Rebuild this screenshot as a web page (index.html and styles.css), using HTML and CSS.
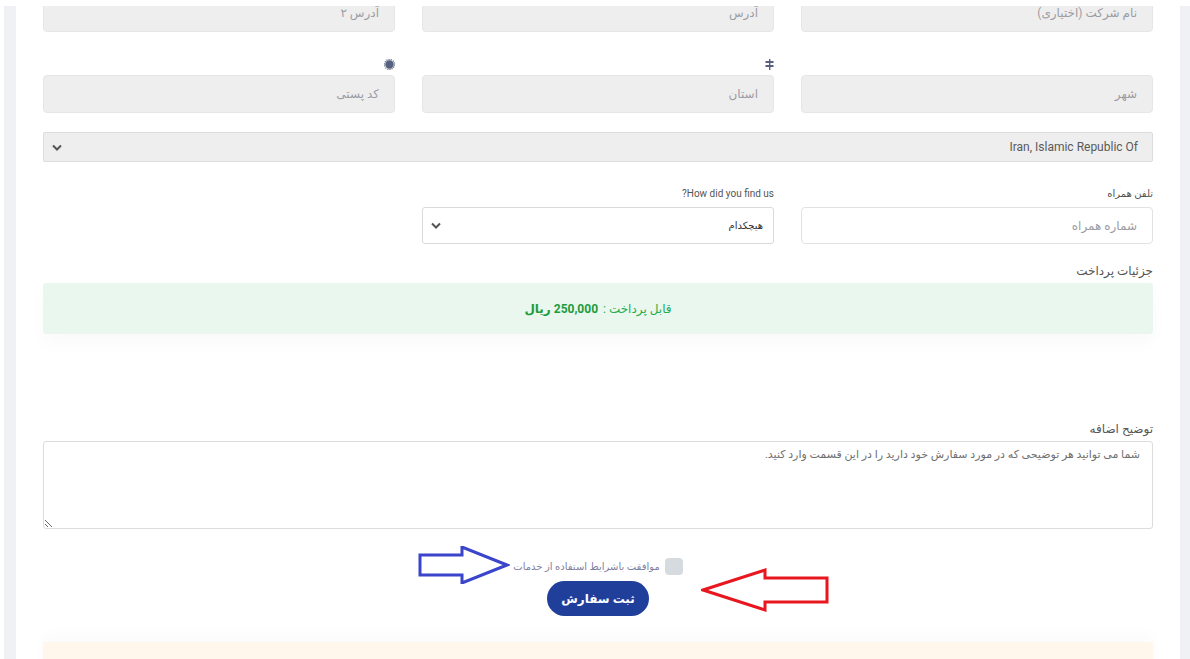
FILE: index.html
```html
<!DOCTYPE html>
<html lang="fa" dir="rtl">
  <head>
    <meta charset="UTF-8" />
    <meta name="viewport" content="width=device-width, initial-scale=1.0" />
    <title>ثبت سفارش</title>
    <link rel="stylesheet" href="styles.css">
  </head>
  <body>
    <div class="wrap">
      <div class="form">
        <div class="grid3 row-first">
          <div class="group"><input class="field" placeholder="نام شرکت (اختیاری)" /></div>
          <div class="group"><input class="field" placeholder="آدرس" /></div>
          <div class="group"><input class="field" placeholder="آدرس ۲" /></div>
        </div>

        <div class="grid3 row-second">
          <div class="group">
            <div class="icon-label"></div>
            <input class="field" placeholder="شهر" />
          </div>
          <div class="group">
            <div class="icon-label">
              <svg width="9" height="11" viewBox="0 0 9 11">
                <rect x="4" y="0" width="1.4" height="11" fill="#56607f" />
                <rect x="0.5" y="2" width="8" height="2" fill="#56607f" />
                <rect x="0.5" y="6" width="8" height="2" fill="#56607f" />
              </svg>
            </div>
            <input class="field" placeholder="استان" />
          </div>
          <div class="group">
            <div class="icon-label">
              <svg width="11" height="11" viewBox="0 0 11 11">
                <circle cx="5.5" cy="5.5" r="4.2" fill="#56607f" />
                <circle cx="5.5" cy="5.5" r="5" fill="none" stroke="#56607f" stroke-width="1.2" stroke-dasharray="1.1 1.1" />
              </svg>
            </div>
            <input class="field" placeholder="کد پستی" />
          </div>
        </div>

        <div class="select select-gray">
          <span class="select-text" dir="ltr">Iran, Islamic Republic Of</span>
          <svg class="chevron" width="10" height="7" viewBox="0 0 10 7"><path d="M1 1.5 L5 5.5 L9 1.5" fill="none" stroke="#555" stroke-width="2" /></svg>
        </div>

        <div class="grid3 row-fourth">
          <div class="group">
            <label class="small-label">تلفن همراه</label>
            <input class="field field-white" placeholder="شماره همراه" />
          </div>
          <div class="group">
            <label class="small-label">How did you find us?</label>
            <div class="select select-white">
              <span class="select-text small">هیچکدام</span>
              <svg class="chevron" width="10" height="7" viewBox="0 0 10 7"><path d="M1 1.5 L5 5.5 L9 1.5" fill="none" stroke="#555" stroke-width="2" /></svg>
            </div>
          </div>
          <div class="group"></div>
        </div>

        <div class="payment">
          <div class="section-label">جزئیات پرداخت</div>
          <div class="pay-box">
            قابل پرداخت : <b>250,000 ریال</b>
          </div>
        </div>

        <div class="notes">
          <div class="section-label">توضیح اضافه</div>
          <textarea class="notes-area" placeholder="شما می توانید هر توضیحی که در مورد سفارش خود دارید را در این قسمت وارد کنید."></textarea>
        </div>

        <div class="submit-area">
          <label class="agree">
            <input type="checkbox" class="check" />
            <span>موافقت باشرایط استفاده از خدمات</span>
          </label>
          <button class="btn-submit">ثبت سفارش</button>

          <svg class="arrow arrow-blue" width="92" height="38" viewBox="0 0 92 38">
            <polygon points="2,9 44,9 44,1 89,19 44,37 44,29 2,29" fill="none" stroke="#3a45cc" stroke-width="3" />
          </svg>
          <svg class="arrow arrow-red" width="128" height="44" viewBox="0 0 128 44">
            <polygon points="2,22 64,2 64,10 126,10 126,34 64,34 64,42" fill="none" stroke="#e8161e" stroke-width="3" />
          </svg>
        </div>

        <div class="notice"></div>
      </div>
    </div>
  </body>
</html>
```

FILE: styles.css
```css
body {
  margin: 0;
  padding-top: 6px;
  background: #fff;
  font-family: Roboto, "DejaVu Sans", sans-serif;
  color: #444;
}

.wrap {
  margin-left: 4px;
  border-left: 12px solid #f0f1f5;
  border-right: 10px solid #f0f1f5;
  height: 653px;
  overflow: hidden;
}

.form {
  padding: 0 27px;
}

.grid3 {
  display: grid;
  grid-template-columns: repeat(3, 1fr);
  gap: 27px;
}

.group {
  display: flex;
  flex-direction: column;
}

.row-first {
  margin-top: -12px;
}

.row-second {
  margin-top: 24px;
}

.icon-label {
  height: 16px;
  margin-bottom: 3px;
  display: flex;
  align-items: center;
  justify-content: flex-start;
  padding-right: 0;
}

.field {
  box-sizing: border-box;
  height: 38px;
  width: 100%;
  background: #eeeeee;
  border: 1px solid #e6e6e6;
  border-radius: 4px;
  padding: 0 15px;
  font-family: Roboto, "DejaVu Sans", sans-serif;
  font-size: 12px;
  color: #555;
  outline: none;
}

.field::placeholder {
  color: #9c9ca4;
}

.field-white {
  background: #fff;
  border-color: #e2e2e2;
  height: 37px;
}

.select {
  box-sizing: border-box;
  display: flex;
  align-items: center;
  justify-content: space-between;
  padding: 0 10px 0 8px;
  border-radius: 3px;
}

.select-gray {
  margin-top: 19px;
  height: 30px;
  background: #eeeeee;
  border: 1px solid #dcdcdc;
  border-radius: 2px;
  padding-right: 14px;
}

.select-white {
  height: 37px;
  background: #fff;
  border: 1px solid #dadada;
}

.select-text {
  font-size: 12px;
  color: #5a5a5a;
}

.select-text.small {
  font-size: 10px;
  color: #333;
}

.row-fourth {
  margin-top: 25px;
}

.small-label {
  font-size: 10px;
  color: #555;
  height: 14px;
  line-height: 14px;
  margin-bottom: 6px;
}

.payment {
  margin-top: 19px;
}

.section-label {
  font-size: 12px;
  color: #555;
  height: 16px;
  line-height: 16px;
  margin-bottom: 4px;
}

.pay-box {
  height: 51px;
  background: #eaf7ee;
  border-radius: 3px;
  display: flex;
  align-items: center;
  justify-content: center;
  color: #26ad4f;
  font-size: 12px;
  box-shadow: 0 10px 18px rgba(0, 0, 0, 0.025);
}

.pay-box b {
  margin-right: 5px;
  color: #1e9c3f;
}

.notes {
  margin-top: 87px;
}

.notes-area {
  display: block;
  box-sizing: border-box;
  width: 100%;
  height: 88px;
  border: 1px solid #dcdcdc;
  border-radius: 3px;
  padding: 6px 12px;
  font-family: Roboto, "DejaVu Sans", sans-serif;
  font-size: 11px;
  color: #555;
  outline: none;
}

.notes-area::placeholder {
  color: #6f6f6f;
}

.submit-area {
  position: relative;
  margin-top: 28px;
  display: flex;
  flex-direction: column;
  align-items: center;
}

.agree {
  display: flex;
  align-items: center;
  gap: 5px;
  height: 18px;
  font-size: 10px;
  color: #7f7fa0;
}

.check {
  appearance: none;
  margin: 0;
  width: 18px;
  height: 17px;
  background: #d6dbe0;
  border-radius: 4px;
}

.btn-submit {
  margin-top: 6px;
  width: 102px;
  height: 35px;
  border: none;
  border-radius: 18px;
  background: #1f3f9b;
  color: #fff;
  font-family: Roboto, "DejaVu Sans", sans-serif;
  font-size: 12px;
  font-weight: bold;
}

.arrow {
  position: absolute;
}

.arrow-blue {
  left: 375px;
  top: -11px;
}

.arrow-red {
  left: 658px;
  top: 11px;
}

.notice {
  margin-top: 26px;
  height: 40px;
  background: #fff6ec;
  box-shadow: 0 -8px 14px rgba(0, 0, 0, 0.02);
}
```
